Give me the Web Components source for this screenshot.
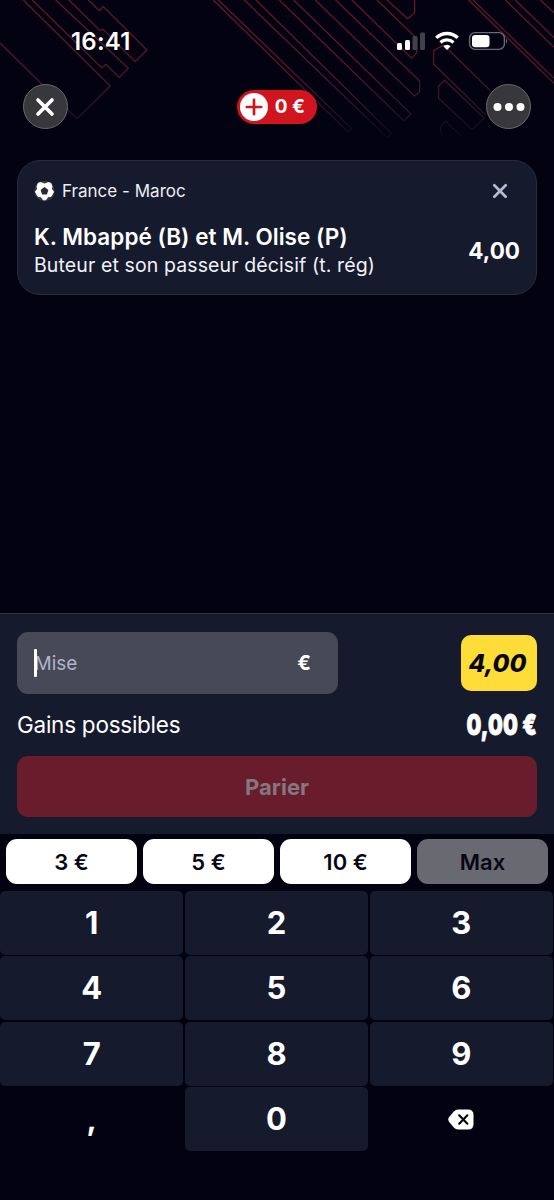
<!DOCTYPE html>
<html lang="fr">
<head>
<meta charset="utf-8">
<title>Panier</title>
<style>
html,body{margin:0;background:#020210}
body{font-family:Inter,"Liberation Sans",sans-serif;color:#fff}
</style>
</head>
<body>
<bet-app></bet-app>
<script>
const define = (name, css, html) => customElements.define(name, class extends HTMLElement {
  constructor() {
    super();
    const t = document.createElement('template');
    t.innerHTML = `<style>*{box-sizing:border-box}${css}</style>${html}`;
    this.attachShadow({mode: 'open'}).append(t.content.cloneNode(true));
  }
});

define('bg-lines', `:host{display:block;width:554px;height:150px}svg{display:block}`, `
<svg width="554" height="150" viewBox="0 0 1662 450" fill="none" stroke="url(#g)" stroke-width="3.6">
<defs><linearGradient id="g" gradientUnits="userSpaceOnUse" x1="0" y1="0" x2="0" y2="420">
<stop offset="0" stop-color="#6c172b"/><stop offset=".5" stop-color="#5e162b"/><stop offset=".75" stop-color="#32172a"/><stop offset="1" stop-color="#0a0817"/></linearGradient></defs>
<path d="M0 129L231 356L331 258L70 0M97 0L306 204L318 193L358 232L385 205L167 0M207 0L300 92L310 88L405 185L441 150L310 20L298 32L265 0"/>
<path d="M640 0L1044 396L1055 386L655 0M733 0L1161 412M768 0L1174 400L1163 412"/>
<g transform="translate(831 0)"><path d="M7 0L380 362L402 342L50 0M115 0L412 288L428 276V243L176 0M225 0L403 174L419 160V115L300 0M330 0L392 56L413 38V0"/>
<path d="M640 272L500 135L470 152V192L628 347M503 241L622 355L585 388L485 295V258ZM493 408L490 380L505 363L555 410M575 0L831 250M588 0L831 235M685 0L831 142M715 0L831 113M790 0L831 38"/></g>
</svg>`);

define('status-bar', `:host{display:flex;height:84px;justify-content:space-between;align-items:flex-start;padding:28px 45px 0 71px}
.time{font-weight:600;font-size:24px;line-height:28px;letter-spacing:.2px}
svg{display:block;margin-top:3px}`, `
<span class="time">16:41</span>
<svg width="112" height="22" viewBox="0 0 112 22">
<g fill="#fff"><rect y="12" width="5" height="7" rx="1.5"/><rect x="8" y="9" width="5" height="10" rx="1.5"/></g>
<g fill="#41414c"><rect x="15.5" y="5" width="5" height="14" rx="1.5"/><rect x="23" y="1.5" width="5" height="17.5" rx="1.5"/></g>
<g fill="none" stroke="#fff"><path d="M39.3 6.9a15.2 15.2 0 0 1 21.4 0" stroke-width="3.4"/><path d="M43.5 11.5a9.3 9.3 0 0 1 13 0" stroke-width="3.2"/></g>
<path d="M50 19l-3.7-3.7a5.2 5.2 0 0 1 7.4 0z" fill="#fff"/>
<rect x="72.6" y="1.6" width="34.8" height="16.8" rx="5.5" fill="none" stroke="#6b6b75" stroke-width="1.4"/>
<rect x="75" y="4" width="17.5" height="12.2" rx="3.2" fill="#fff"/>
<path d="M109 7.5q2.4 2.6 0 5.2z" fill="#6b6b75"/></svg>`);

define('round-button', `:host{display:flex;align-items:center;justify-content:center;width:45px;height:45px;border-radius:50%;background:#37373c;border:1px solid #68686f;box-sizing:border-box}
::slotted(svg){display:block}`, `<slot></slot>`);

define('top-nav', `:host{display:flex;justify-content:space-between;align-items:center;padding:0 23px 0 22.5px;height:45px}
.pill{display:flex;align-items:center;width:80px;height:34px;border-radius:17px;background:#d1141d;padding-left:3px;gap:7px;font-size:19px;font-weight:700;white-space:pre}
.pill svg{flex:none}`, `
<round-button><svg width="20" height="20" viewBox="0 0 20 20"><path d="M3 3L17 17M17 3L3 17" stroke="#fff" stroke-width="3.7" stroke-linecap="round"/></svg></round-button>
<div class="pill"><svg width="28" height="28" viewBox="0 0 28 28"><circle cx="14" cy="14" r="14" fill="#fff"/><path d="M14 6.8V21.2M6.8 14H21.2" stroke="#d1141d" stroke-width="2.7" stroke-linecap="round"/></svg><span>0 €</span></div>
<round-button><svg width="32" height="10" viewBox="0 0 32 10" fill="#fff"><circle cx="4.5" cy="5" r="4"/><circle cx="16" cy="5" r="4"/><circle cx="27.5" cy="5" r="4"/></svg></round-button>`);

define('bet-card', `:host{display:flex;justify-content:space-between;height:135px;border-radius:23px;background:#161a2d;border:1px solid #2a2c3d;box-sizing:border-box;margin:0 17px;padding:18px 16px 0;white-space:nowrap}
.event{display:flex;align-items:center;gap:7px;height:24px;font-size:17px;letter-spacing:.02px;color:#eceef5}
.name{font-size:22.5px;line-height:28px;font-weight:600;margin-top:19.5px;letter-spacing:.03px}
.market{font-size:19.5px;line-height:28px;letter-spacing:.11px;color:#f0f1f7}
.right{display:flex;flex-direction:column;align-items:flex-end}
.right svg{margin:4px 12px 0 0}
.odd{font-size:22.5px;font-weight:700;line-height:28px;margin-top:37.5px}`, `
<div><div class="event"><svg width="21" height="22" viewBox="0 0 21 22"><circle cx="10.5" cy="11" r="10.2" fill="#393a42"/><path d="M4.4 3L7 2.7L10.5 4L14 2.7L16.6 3L18 6.4L17.4 9L19.6 11.8L17.2 16.2L13.8 16.8L11.8 19.8H9.2L7.2 16.8L3.8 16.2L1.4 11.8L3.6 9L3 6.4Z" fill="#fff" stroke="#fff" stroke-linejoin="round"/><path d="M10.5 7L14.4 9.9L12.9 14.4H8.1L6.6 9.9Z" fill="#292930"/></svg><span>France - Maroc</span></div>
<div class="name">K. Mbappé (B) et M. Olise (P)</div><div class="market">Buteur et son passeur décisif (t. rég)</div></div>
<div class="right"><svg width="16" height="16" viewBox="0 0 16 16"><path d="M2.3 2.3L13.7 13.7M13.7 2.3L2.3 13.7" stroke="#b5bbd2" stroke-width="2.7" stroke-linecap="round"/></svg><div class="odd">4,00</div></div>`);

define('stake-panel', `:host{display:block;height:221px;background:#161a2d;border-top:1px solid #30323f;box-sizing:border-box;padding:18px 17px 0}
.row{display:flex;justify-content:space-between;align-items:center}
.field{display:flex;justify-content:space-between;align-items:center;width:321px;height:62px;border-radius:11px;background:#474957;padding:0 27px 0 17px;font-size:19px}
.ph{display:flex;align-items:center;color:#afb4c9}
.ph i{width:3px;height:28px;border-radius:1px;background:#fff;margin-right:-2.5px;z-index:1}
.eur{font-weight:700;font-size:20px}
.tag{display:flex;align-items:center;justify-content:center;width:76px;height:56px;border-radius:10px;background:#ffdd38;color:#070713;font-size:24.5px;font-weight:800;font-style:italic;padding-right:3px}
.gain{height:62px;font-size:22.5px;letter-spacing:-.25px;padding-bottom:2px}
.sum{font-size:29px;font-weight:900;transform:scaleX(.72);transform-origin:right center;letter-spacing:.2px;white-space:nowrap;-webkit-text-stroke:.8px #fff}
.cta{display:flex;align-items:center;justify-content:center;height:61px;border-radius:11px;background:#691c2b;color:#857780;font-size:22px;font-weight:700}`, `
<div class="row"><div class="field"><span class="ph"><i></i>Mise</span><span class="eur">€</span></div><div class="tag">4,00</div></div>
<div class="row gain"><span>Gains possibles</span><span class="sum">0,00 €</span></div>
<div class="cta">Parier</div>`);

define('amount-chip', `:host{display:flex;align-items:center;justify-content:center;height:45px;border-radius:11px;background:#fff;color:#070713;font-size:22px;font-weight:600}
:host([disabled]){background:#696971}`, `<slot></slot>`);

define('num-key', `:host{display:flex;align-items:center;justify-content:center;border-radius:5px;background:#161a2d;font-size:31px;font-weight:650;line-height:32px;box-sizing:border-box}
:host([plain]){background:none}`, `<slot></slot>`);

define('key-pad', `:host{display:block}
.chips{display:grid;grid-template-columns:repeat(4,131px);gap:6px;padding:5px 6px 6.7px}
.keys{display:grid;grid-template-columns:repeat(3,1fr);grid-auto-rows:64px;gap:1.5px;padding:0 1px 0 0}`, `
<div class="chips"><amount-chip>3 €</amount-chip><amount-chip>5 €</amount-chip><amount-chip>10 €</amount-chip><amount-chip disabled>Max</amount-chip></div>
<div class="keys">${[1,2,3,4,5,6,7,8,9].map(n => `<num-key>${n}</num-key>`).join('')}<num-key plain>,</num-key><num-key>0</num-key><num-key plain><svg width="26" height="21" viewBox="0 0 26 21"><path d="M10.2 .5H20Q25.5 .5 25.5 6V15Q25.5 20.5 20 20.5H10.2Q7.7 20.5 5.8 18.5L1 12.7Q-.5 10.5 1 8.3L5.8 2.5Q7.7 .5 10.2 .5Z" fill="#fff"/><path d="M11.2 6.3L19.4 14.7M19.4 6.3L11.2 14.7" stroke="#020210" stroke-width="2.1" stroke-linecap="round"/></svg></num-key></div>`);

define('bet-app', `:host{display:flex;flex-direction:column;position:relative;width:554px;height:1200px;overflow:hidden;background:#020210}
bg-lines{position:absolute;top:0;left:0}
status-bar,top-nav{position:relative}
bet-card{margin-top:31px}
.space{height:318px}`, `
<bg-lines></bg-lines><status-bar></status-bar><top-nav></top-nav><bet-card></bet-card><div class="space"></div><stake-panel></stake-panel><key-pad></key-pad>`);
</script>
</body>
</html>
